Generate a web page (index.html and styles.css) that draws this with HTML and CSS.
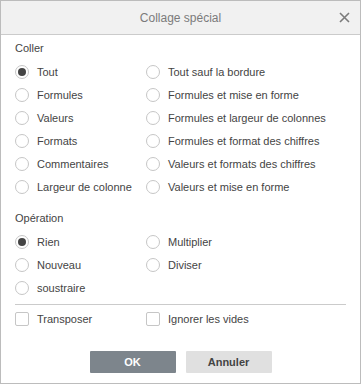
FILE: index.html
```html
<!DOCTYPE html>
<html lang="fr">
<head>
  <meta charset="UTF-8">
  <title>Collage spécial</title>
  <link rel="stylesheet" href="styles.css">
</head>
<body>

  <div class="dialog">
    <div class="header">
      <span class="title">Collage spécial</span>
      <span class="close">
        <svg width="11" height="11" viewBox="0 0 11 11"><path d="M1 1L10 10M10 1L1 10" stroke="#7b7b7b" stroke-width="1.6"/></svg>
      </span>
    </div>

    <div class="content">
      <div class="section-label">Coller</div>
      <div class="grid">
        <div class="opt"><span class="radio checked"></span>Tout</div>
        <div class="opt"><span class="radio"></span>Tout sauf la bordure</div>
        <div class="opt"><span class="radio"></span>Formules</div>
        <div class="opt"><span class="radio"></span>Formules et mise en forme</div>
        <div class="opt"><span class="radio"></span>Valeurs</div>
        <div class="opt"><span class="radio"></span>Formules et largeur de colonnes</div>
        <div class="opt"><span class="radio"></span>Formats</div>
        <div class="opt"><span class="radio"></span>Formules et format des chiffres</div>
        <div class="opt"><span class="radio"></span>Commentaires</div>
        <div class="opt"><span class="radio"></span>Valeurs et formats des chiffres</div>
        <div class="opt"><span class="radio"></span>Largeur de colonne</div>
        <div class="opt"><span class="radio"></span>Valeurs et mise en forme</div>
      </div>

      <div class="section-label second">Opération</div>
      <div class="grid">
        <div class="opt"><span class="radio checked"></span>Rien</div>
        <div class="opt"><span class="radio"></span>Multiplier</div>
        <div class="opt"><span class="radio"></span>Nouveau</div>
        <div class="opt"><span class="radio"></span>Diviser</div>
        <div class="opt"><span class="radio"></span>soustraire</div>
      </div>

      <div class="separator"></div>

      <div class="grid checks">
        <div class="opt"><span class="checkbox"></span>Transposer</div>
        <div class="opt"><span class="checkbox"></span>Ignorer les vides</div>
      </div>

      <div class="buttons">
        <button class="btn primary">OK</button>
        <button class="btn">Annuler</button>
      </div>
    </div>
  </div>

</body>
</html>
```

FILE: styles.css
```css
* { box-sizing: border-box; }

body {
  margin: 0;
  font-family: 'Liberation Sans', Arial, sans-serif;
  font-size: 11px;
  color: #444;
  background: #fff;
}

.dialog {
  width: 361px;
  height: 384px;
  border: 1px solid #bcbcbc;
  background: #fff;
}

.header {
  height: 34px;
  background: #f1f1f1;
  border-bottom: 1px solid #cbcbcb;
  display: flex;
  align-items: center;
  justify-content: center;
  position: relative;
}

.title {
  font-size: 12px;
  color: #7b7b7b;
}

.close {
  position: absolute;
  right: 10px;
  top: 11px;
  display: flex;
}

.content {
  padding: 5px 14px 0;
}

.section-label {
  height: 16px;
  line-height: 16px;
  font-size: 11px;
  color: #444;
}

.section-label.second {
  margin-top: 12px;
}

.grid {
  display: grid;
  grid-template-columns: 131px 1fr;
  margin-top: 4px;
}

.opt {
  height: 23px;
  display: flex;
  align-items: center;
  white-space: nowrap;
}

.radio {
  width: 14px;
  height: 14px;
  border: 1px solid #c6c6c6;
  border-radius: 50%;
  margin-right: 8px;
  display: flex;
  align-items: center;
  justify-content: center;
  flex: none;
}

.radio.checked::after {
  content: "";
  width: 8px;
  height: 8px;
  border-radius: 50%;
  background: #444;
}

.checkbox {
  width: 14px;
  height: 14px;
  border: 1px solid #c6c6c6;
  border-radius: 2px;
  margin-right: 8px;
  flex: none;
}

.separator {
  height: 1px;
  background: #cbcbcb;
  margin-top: 5px;
}

.checks {
  margin-top: 2px;
}

.buttons {
  display: flex;
  justify-content: center;
  gap: 10px;
  margin-top: 21px;
}

.btn {
  width: 86px;
  height: 22px;
  border: none;
  border-radius: 1px;
  background: #e0e0e0;
  color: #444;
  font-family: 'Liberation Sans', Arial, sans-serif;
  font-size: 11px;
  font-weight: bold;
  padding: 0;
}

.btn.primary {
  background: #7d858c;
  color: #fff;
}
```
